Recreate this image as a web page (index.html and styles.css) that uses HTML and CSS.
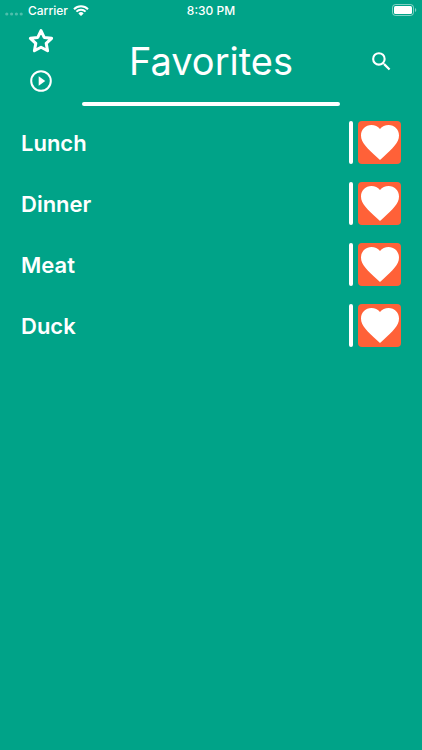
FILE: index.html
```
<!DOCTYPE html>
<html lang="en">
<head>
  <meta charset="UTF-8" />
  <meta name="viewport" content="width=device-width, initial-scale=1.0"/>
  <title>Favorites</title>
  <link rel="stylesheet" href="styles.css">
</head>
<body>

  <div class="status-bar">
    <div class="status-left">
      <svg class="signal" viewBox="0 0 18 4" aria-hidden="true">
        <circle cx="1.8" cy="2" r="1.6"/>
        <circle cx="6.6" cy="2" r="1.6"/>
        <circle cx="11.4" cy="2" r="1.6"/>
        <circle cx="16.2" cy="2" r="1.6"/>
      </svg>
      <span>Carrier</span>
      <svg class="wifi" viewBox="0 0 16 11" aria-hidden="true">
        <path d="M1 4.2a10 10 0 0 1 14 0M3.4 6.6a6.5 6.5 0 0 1 9.2 0" fill="none" stroke="#fff" stroke-width="2"/>
        <path d="M8 11L5.4 8.4a3.7 3.7 0 0 1 5.2 0z" fill="#fff"/>
      </svg>
    </div>
    <div class="status-time">8:30 PM</div>
    <div class="status-right">
      <svg class="battery" viewBox="0 0 25 12" aria-hidden="true">
        <rect x=".5" y=".5" width="21" height="11" rx="3" fill="none" stroke="#fff" stroke-opacity=".5"/>
        <rect x="2" y="2" width="18" height="8" rx="1.5" fill="#fff"/>
        <path d="M23 4v4a2.2 2.2 0 0 0 0-4z" fill="#fff" fill-opacity=".5"/>
      </svg>
    </div>
  </div>

  <header class="header">
    <div class="header-actions">
      <button type="button" class="icon-btn" aria-label="Favorites">
        <svg class="star" viewBox="0 0 26 26" aria-hidden="true">
          <path d="M13 2.6L16.2 9.4L23.6 10.3L18.2 15.4L19.6 22.8L13 19.2L6.4 22.8L7.8 15.4L2.4 10.3L9.8 9.4Z" fill="none" stroke="#fff" stroke-width="3" stroke-linejoin="round"/>
        </svg>
      </button>
      <button type="button" class="icon-btn" aria-label="Play">
        <svg class="play" viewBox="0 0 22 22" aria-hidden="true">
          <circle cx="11" cy="11" r="9.8" fill="none" stroke="#fff" stroke-width="2"/>
          <path d="M8.7 6.3v9.4L15.3 11z" fill="#fff"/>
        </svg>
      </button>
    </div>
    <h1>Favorites</h1>
    <button type="button" class="icon-btn search-btn" aria-label="Search">
      <svg class="search" viewBox="0 0 24 24" aria-hidden="true">
        <path fill="#fff" d="M15.5 14h-.79l-.28-.27A6.47 6.47 0 0 0 16 9.5 6.5 6.5 0 1 0 9.5 16c1.61 0 3.09-.59 4.23-1.57l.27.28v.79l5 4.99L20.49 19l-4.99-5zm-6 0a4.5 4.5 0 1 1 0-9 4.5 4.5 0 0 1 0 9z"/>
      </svg>
    </button>
  </header>

  <main>
    <ul class="list">
      <li class="row">
        <span class="name">Lunch</span>
        <span class="divider"></span>
        <button type="button" class="heart-btn" aria-label="Remove Lunch from favorites">
          <svg class="heart" viewBox="2 3 20 18.35" aria-hidden="true"><use href="#heart"/></svg>
        </button>
      </li>
      <li class="row">
        <span class="name">Dinner</span>
        <span class="divider"></span>
        <button type="button" class="heart-btn" aria-label="Remove Dinner from favorites">
          <svg class="heart" viewBox="2 3 20 18.35" aria-hidden="true"><use href="#heart"/></svg>
        </button>
      </li>
      <li class="row">
        <span class="name">Meat</span>
        <span class="divider"></span>
        <button type="button" class="heart-btn" aria-label="Remove Meat from favorites">
          <svg class="heart" viewBox="2 3 20 18.35" aria-hidden="true"><use href="#heart"/></svg>
        </button>
      </li>
      <li class="row">
        <span class="name">Duck</span>
        <span class="divider"></span>
        <button type="button" class="heart-btn" aria-label="Remove Duck from favorites">
          <svg class="heart" viewBox="2 3 20 18.35" aria-hidden="true"><use href="#heart"/></svg>
        </button>
      </li>
    </ul>
  </main>

  <!-- Shared shapes -->
  <svg width="0" height="0" class="shapes" aria-hidden="true">
    <defs>
      <path id="heart" d="M12 21.35l-1.45-1.32C5.4 15.36 2 12.28 2 8.5 2 5.42 4.42 3 7.5 3c1.74 0 3.41.81 4.5 2.09C13.09 3.81 14.76 3 16.5 3 19.58 3 22 5.42 22 8.5c0 3.78-3.4 6.86-8.55 11.54L12 21.35z"/>
    </defs>
  </svg>

</body>
</html>
```
FILE: styles.css
```
/* Base */
* {
  box-sizing: border-box;
}
body {
  margin: 0;
  min-height: 100vh;
  font-family: Inter, "Liberation Sans", sans-serif;
  background-color: #00a388;
  color: #fff;
}
svg {
  display: block;
}
button {
  padding: 0;
  border: none;
  background: none;
  cursor: pointer;
}

/* Status bar */
.status-bar {
  display: grid;
  grid-template-columns: 1fr auto 1fr;
  align-items: center;
  height: 20px;
  padding: 0 5px;
  font-size: 12px;
  font-weight: 500;
}
.status-left {
  display: flex;
  align-items: center;
  gap: 5px;
}
.status-right {
  display: flex;
  justify-content: flex-end;
}
.signal {
  width: 18px;
  height: 4px;
  margin-top: 8px;
  fill: #fff;
  opacity: 0.3;
}
.wifi {
  width: 16px;
  height: 11px;
}
.battery {
  width: 25px;
  height: 12px;
}

/* Header */
.header {
  display: grid;
  grid-template-columns: 82px 1fr 82px;
  height: 86px;
}
.header h1 {
  margin: 0;
  font-size: 38px;
  font-weight: 400;
  line-height: 82px;
  text-align: center;
}
.header h1::after {
  content: "";
  display: block;
  height: 4px;
  border-radius: 2px;
  background-color: #fff;
}
.header-actions {
  display: flex;
  flex-direction: column;
  align-items: center;
  gap: 16px;
  padding-top: 8px;
}
.star {
  width: 26px;
  height: 26px;
}
.play {
  width: 22px;
  height: 22px;
}
.search-btn {
  display: flex;
  align-items: center;
  justify-content: center;
  height: 82px;
}
.search {
  width: 25px;
  height: 25px;
}

/* List */
.list {
  display: flex;
  flex-direction: column;
  gap: 18px;
  margin: 0;
  padding: 15px 21px;
  list-style: none;
}
.row {
  display: flex;
  align-items: center;
  gap: 5px;
}
.name {
  flex: 1;
  font-size: 22px;
  font-weight: 600;
}
.divider {
  width: 4px;
  height: 43px;
  border-radius: 2px;
  background-color: #fff;
}
.heart-btn {
  display: flex;
  align-items: center;
  justify-content: center;
  width: 43px;
  height: 43px;
  border-radius: 4px;
  background-color: #ff6138;
}
.heart {
  width: 38px;
  height: 35px;
  fill: #fff;
}
.shapes {
  position: absolute;
}
```
